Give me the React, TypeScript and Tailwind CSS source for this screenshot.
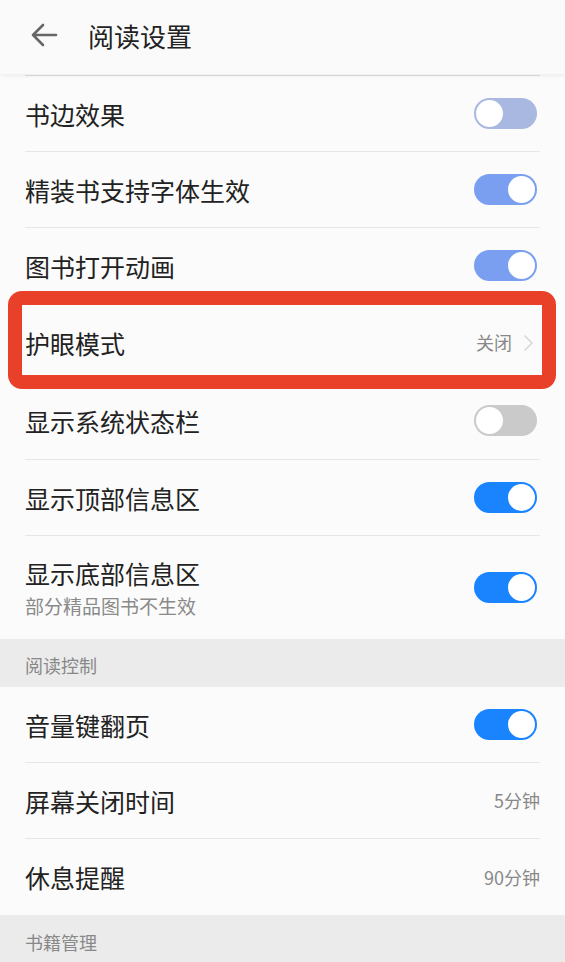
type Row = {
  title: string;
  sub?: string;
  toggle?: 'off' | 'offGrey' | 'onSoft' | 'on';
  value?: string;
  chevron?: boolean;
  tall?: boolean;
  marked?: boolean;
};

const trackColors = {
  off: 'bg-[#a8b8e1]',
  offGrey: 'bg-[#cacaca]',
  onSoft: 'bg-[#7b9ff0]',
  on: 'bg-[#1a84ff]',
};

function Toggle({ kind }: { kind: 'off' | 'offGrey' | 'onSoft' | 'on' }) {
  const on = kind === 'on' || kind === 'onSoft';
  return (
    <div
      className={`flex h-[31px] w-[63px] items-center rounded-full p-[2px] ${trackColors[kind]} ${
        on ? 'justify-end' : 'justify-start'
      }`}
    >
      <div className="h-[27px] w-[27px] rounded-full bg-white" />
    </div>
  );
}

function SettingRow({ row, last }: { row: Row; last?: boolean }) {
  return (
    <div className="relative px-[25px]">
      <div
        className={`flex items-center justify-between ${row.sub ? 'h-[103px]' : row.tall ? 'h-[78px]' : 'h-[76px]'} ${
          last ? '' : 'border-b border-[#e6e6e6]'
        }`}
      >
        <div className="flex flex-col">
          <span className="text-[25px] leading-[30px] text-[#222]">{row.title}</span>
          {row.sub && <span className="mt-[6px] text-[19px] leading-[24px] text-[#8a8a8a]">{row.sub}</span>}
        </div>
        {row.toggle && (
          <div className="mr-[3px]">
            <Toggle kind={row.toggle} />
          </div>
        )}
        {row.value && (
          <div className="flex items-center">
            <span className="text-[18px] text-[#888]">{row.value}</span>
            {row.chevron && (
              <svg className="ml-[12px] mr-[7px] h-[16px] w-[9px]" viewBox="0 0 9 16" fill="none">
                <path d="M1 1l7 7-7 7" stroke="#d6d6d6" strokeWidth="1.5" strokeLinecap="round" strokeLinejoin="round" />
              </svg>
            )}
          </div>
        )}
      </div>
      {row.marked && (
        <div className="pointer-events-none absolute left-[8px] right-[9px] -top-[13px] -bottom-[7px] rounded-[14px] border-[14px] border-[#e9402a]" />
      )}
    </div>
  );
}

function Section({ title, last }: { title: string; last?: boolean }) {
  return (
    <div className={`flex items-center bg-[#ebebeb] px-[25px] pt-[5px] ${last ? 'h-[49px]' : 'h-[48px]'}`}>
      <span className="text-[18px] text-[#888]">{title}</span>
    </div>
  );
}

const group1: Row[] = [
  { title: '书边效果', toggle: 'off' },
  { title: '精装书支持字体生效', toggle: 'onSoft' },
  { title: '图书打开动画', toggle: 'onSoft' },
  { title: '护眼模式', value: '关闭', chevron: true, tall: true, marked: true },
  { title: '显示系统状态栏', toggle: 'offGrey', tall: true },
  { title: '显示顶部信息区', toggle: 'on' },
  { title: '显示底部信息区', sub: '部分精品图书不生效', toggle: 'on' },
];

const group2: Row[] = [
  { title: '音量键翻页', toggle: 'on' },
  { title: '屏幕关闭时间', value: '5分钟' },
  { title: '休息提醒', value: '90分钟' },
];

export default function App() {
  return (
    <div
      className="h-[962px] w-[565px] overflow-hidden bg-[#fbfbfb]"
      style={{ fontFamily: '"Noto Sans CJK SC", "Noto Sans", sans-serif' }}
    >
      {/* Header */}
      <div className="relative z-10 flex h-[74px] items-center bg-[#fafafa] pb-[4px] shadow-[0_2px_4px_rgba(0,0,0,0.06)]">
        <svg className="ml-[30px] h-[24px] w-[28px]" viewBox="0 0 28 24" fill="none">
          <path d="M26 12H3M13 2L3 12l10 10" stroke="#666" strokeWidth="2.6" strokeLinecap="round" strokeLinejoin="round" />
        </svg>
        <span className="ml-[30px] text-[26px] text-[#222]">阅读设置</span>
      </div>

      <div className="pt-[1px]">
        <div className="mx-[25px] border-t border-[#dcdcdc]" />
        {group1.map((row, i) => (
          <SettingRow key={row.title} row={row} last={i === group1.length - 1} />
        ))}
        <Section title="阅读控制" />
        {group2.map((row, i) => (
          <SettingRow key={row.title} row={row} last={i === group2.length - 1} />
        ))}
        <Section title="书籍管理" last />
      </div>
    </div>
  );
}
